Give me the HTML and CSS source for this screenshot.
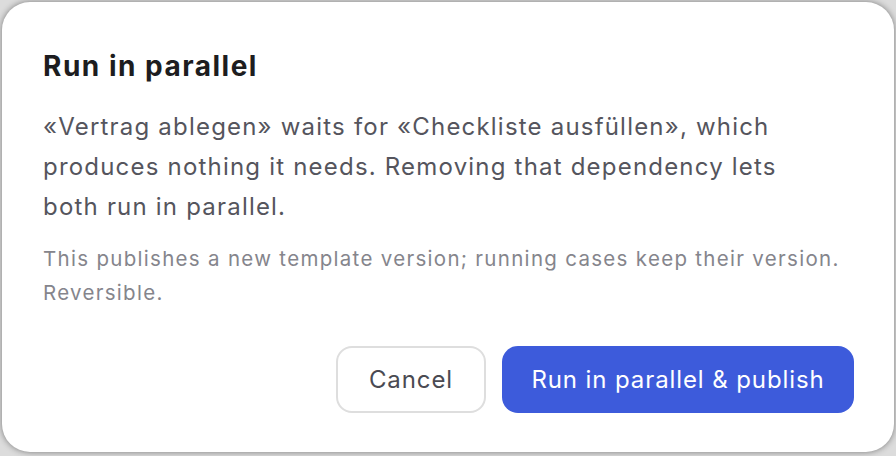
FILE: index.html
```html
<!DOCTYPE html>
<html lang="en">
<head>
  <meta charset="UTF-8">
  <meta name="viewport" content="width=device-width, initial-scale=1.0">
  <title>Run in parallel</title>
  <link rel="stylesheet" href="styles.css">
</head>
<body>
  <div class="dialog">
    <h2 class="dialog-title">Run in parallel</h2>
    <p class="dialog-text">«Vertrag ablegen» waits for «Checkliste ausfüllen», which produces nothing it needs. Removing that dependency lets both run in parallel.</p>
    <p class="dialog-note">This publishes a new template version; running cases keep their version. Reversible.</p>
    <div class="dialog-actions">
      <button class="btn btn-cancel">Cancel</button>
      <button class="btn btn-primary">Run in parallel &amp; publish</button>
    </div>
  </div>
</body>
</html>
```

FILE: styles.css
```css
html,
body {
  margin: 0;
  height: 100%;
}

body {
  font-family: Inter, "Noto Sans", sans-serif;
  background-color: #dcdcdc;
  padding: 2px 2px 4px 2px;
  box-sizing: border-box;
}

.dialog {
  background-color: #fff;
  height: 100%;
  box-sizing: border-box;
  border-radius: 28px;
  box-shadow: 0 0 6px rgba(0, 0, 0, 0.45);
  padding: 47px 40px 0 41px;
  display: flex;
  flex-direction: column;
}

.dialog-title {
  margin: 0;
  font-size: 28px;
  line-height: 34px;
  font-weight: 700;
  letter-spacing: 1.5px;
  color: #1d1d20;
}

.dialog-text {
  margin: 24px 0 0;
  max-width: 790px;
  font-size: 24px;
  line-height: 40px;
  letter-spacing: 1.2px;
  color: #55555d;
}

.dialog-note {
  margin: 15px 0 0;
  font-size: 20.5px;
  line-height: 34px;
  letter-spacing: 1.3px;
  color: #85858c;
}

.dialog-actions {
  margin-top: 36px;
  display: flex;
  justify-content: flex-end;
  gap: 16px;
}

.btn {
  font-family: inherit;
  font-size: 24px;
  letter-spacing: 0.9px;
  height: 67px;
  padding: 0 20px;
  border-radius: 16px;
  cursor: pointer;
}

.btn-cancel {
  background-color: #fff;
  color: #4a4a52;
  border: 2px solid #dedede;
  width: 150px;
}

.btn-primary {
  background-color: #3d5bdb;
  color: #fff;
  border: none;
  width: 352px;
}
```
